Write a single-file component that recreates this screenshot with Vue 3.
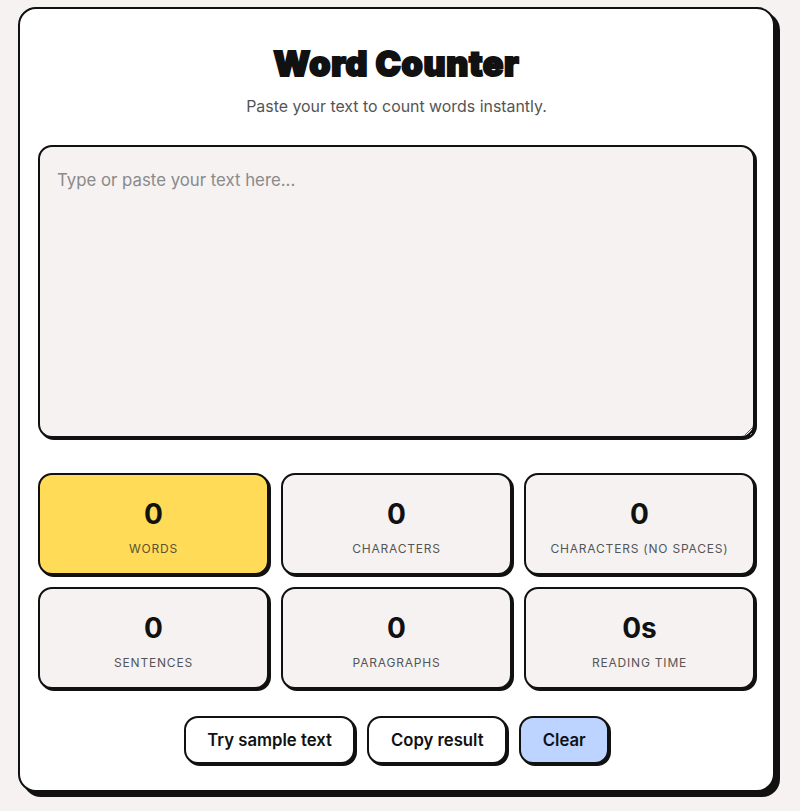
<script setup>
const stats = [
  { value: '0', label: 'Words', accent: true },
  { value: '0', label: 'Characters' },
  { value: '0', label: 'Characters (no spaces)' },
  { value: '0', label: 'Sentences' },
  { value: '0', label: 'Paragraphs' },
  { value: '0s', label: 'Reading time' },
]
</script>

<template>
  <div class="page">
    <main class="card">
      <h1 class="title">Word Counter</h1>
      <p class="subtitle">Paste your text to count words instantly.</p>
      <textarea class="input" placeholder="Type or paste your text here..."></textarea>
      <section class="stats">
        <div v-for="s in stats" :key="s.label" class="stat" :class="{ accent: s.accent }">
          <div class="value">{{ s.value }}</div>
          <div class="label">{{ s.label }}</div>
        </div>
      </section>
      <div class="actions">
        <button class="btn">Try sample text</button>
        <button class="btn">Copy result</button>
        <button class="btn blue">Clear</button>
      </div>
    </main>
  </div>
</template>

<style>
html, body { margin: 0; background: #f5f2f1; }
</style>

<style scoped>
.page {
  box-sizing: border-box;
  width: 800px;
  height: 811px;
  padding: 7px 25px 0 18px;
  background: #f5f2f1;
  font-family: Inter, "Liberation Sans", sans-serif;
  color: #111;
  overflow: hidden;
}
.card {
  box-sizing: border-box;
  height: 785px;
  padding: 36px 18px 0;
  background: #fff;
  border: 2px solid #111;
  border-radius: 18px;
  box-shadow: 5px 5px 0 #111;
}
.title {
  margin: 0;
  text-align: center;
  font-size: 34px;
  line-height: 38px;
  font-weight: 900;
  letter-spacing: 0.65px;
  -webkit-text-stroke: 2px #111;
}
.subtitle {
  margin: 13px 0 0;
  text-align: center;
  font-size: 15.9px;
  line-height: 22px;
  color: #555;
}
.input {
  display: block;
  box-sizing: border-box;
  width: 100%;
  height: 293px;
  margin: 27px 0 0;
  padding: 21px 18px 18px 17px;
  background: #f5f2f1;
  border: 2px solid #111;
  border-radius: 14px;
  box-shadow: 2px 2px 0 #111;
  font-family: inherit;
  font-size: 16.8px;
  line-height: 25px;
  color: #111;
  outline: none;
}
.input::placeholder { color: #8a8a8a; }
.stats {
  display: grid;
  grid-template-columns: repeat(3, 1fr);
  gap: 12px;
  margin-top: 35px;
}
.stat {
  box-sizing: border-box;
  height: 102px;
  padding: 22px 8px 0;
  text-align: center;
  background: #f5f2f1;
  border: 2px solid #111;
  border-radius: 14px;
  box-shadow: 2px 2px 0 #111;
}
.stat.accent { background: #ffdb58; }
.value {
  font-size: 28px;
  line-height: 34px;
  font-weight: 700;
}
.label {
  margin-top: 10px;
  font-size: 12px;
  line-height: 16px;
  letter-spacing: 0.8px;
  text-transform: uppercase;
  color: #555;
}
.accent .label { color: #5a5232; }
.actions {
  display: flex;
  justify-content: center;
  gap: 12px;
  margin-top: 27px;
}
.btn {
  box-sizing: border-box;
  height: 48px;
  padding: 0 21.6px;
  background: #fff;
  border: 2px solid #111;
  border-radius: 14px;
  box-shadow: 2px 2px 0 #111;
  font-family: inherit;
  font-size: 16.7px;
  font-weight: 600;
  color: #111;
}
.btn.blue { background: #bcd4ff; }
</style>
